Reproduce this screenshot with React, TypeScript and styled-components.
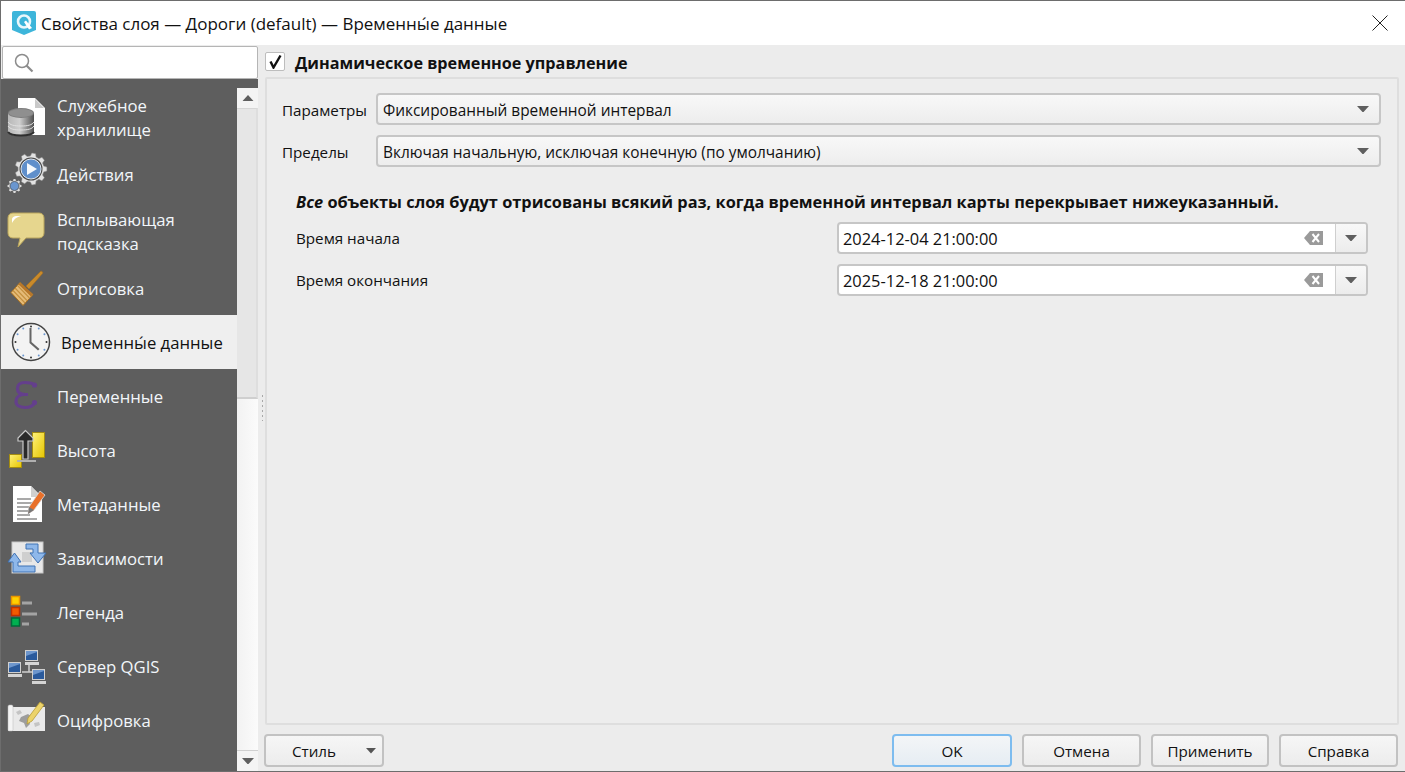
import { ReactNode } from 'react';
import styled, { createGlobalStyle } from 'styled-components';

const GlobalStyle = createGlobalStyle`
  html, body {
    margin: 0;
    padding: 0;
    background: #ececec;
    overflow: hidden;
  }
  * {
    box-sizing: border-box;
  }
`;

const Window = styled.div`
  width: 1405px;
  height: 772px;
  display: flex;
  flex-direction: column;
  border-top: 1px solid #6d6d6d;
  border-left: 1px solid #6d6d6d;
  border-bottom: 1px solid #6d6d6d;
  background: #ececec;
  font-family: 'Open Sans', 'Noto Sans', sans-serif;
  font-size: 15.2px;
  color: #111;
`;

const TitleBar = styled.div`
  height: 44px;
  flex: none;
  display: flex;
  align-items: center;
  background: #fff;
  padding-left: 11px;
  font-size: 17px;
`;

const TitleText = styled.span`
  margin-left: 5px;
  flex: 1;
`;

const CloseButton = styled.div`
  width: 16px;
  height: 16px;
  margin-right: 17px;
  margin-top: -1px;
  display: flex;
`;

const Body = styled.div`
  flex: 1;
  display: flex;
  min-height: 0;
`;

const Sidebar = styled.div`
  width: 257px;
  flex: none;
  display: flex;
  flex-direction: column;
`;

const SearchBox = styled.div`
  height: 33px;
  flex: none;
  margin: 1px 0 0 1px;
  background: #fff;
  border: 1px solid #b5b5b5;
  border-radius: 2px;
  display: flex;
  align-items: center;
  padding-left: 11px;
`;

const ListArea = styled.div`
  flex: 1;
  display: flex;
  background: #5e5e5e;
  padding-top: 9px;
  min-height: 0;
`;

const List = styled.div`
  width: 236px;
  flex: none;
`;

const Item = styled.div<{ $active?: boolean; $height: number }>`
  height: ${(p) => p.$height}px;
  display: flex;
  align-items: center;
  color: ${(p) => (p.$active ? '#111' : '#f2f6fa')};
  background: ${(p) => (p.$active ? '#efefef' : 'transparent')};
  padding-left: ${(p) => (p.$active ? 10 : 6)}px;
  font-size: 16.7px;
`;

const ItemIcon = styled.div`
  width: 40px;
  height: 40px;
  flex: none;
  margin-right: 10px;
  display: flex;
  align-items: center;
  justify-content: center;

  svg {
    overflow: visible;
  }
`;

const ItemLabel = styled.div<{ $low?: boolean }>`
  line-height: 24px;
  white-space: pre-line;
  padding-top: ${(p) => (p.$low ? 2 : 0)}px;
`;

const ScrollBar = styled.div`
  width: 21px;
  flex: none;
  display: flex;
  flex-direction: column;
  background: #f1f1f1;
`;

const ScrollButton = styled.div`
  height: 20px;
  flex: none;
  display: flex;
  align-items: center;
  justify-content: center;
  background: #f4f4f4;
`;

const ScrollThumb = styled.div`
  height: 291px;
  flex: none;
  background: #e6e6e6;
  border-top: 1px solid #d6d6d6;
  border-bottom: 2px solid #cfcfcf;
  border-right: 2px solid #dedede;
`;

const ScrollTrack = styled.div`
  flex: 1;
  background: linear-gradient(90deg, #f2f2f2, #fbfbfb);
  border-bottom: 1px solid #d0d0d0;
`;

const Splitter = styled.div`
  width: 6px;
  flex: none;
  display: flex;
  align-items: center;
  justify-content: center;
`;

const SplitterDots = styled.div`
  width: 1px;
  height: 26px;
  margin-left: 2px;
  background: repeating-linear-gradient(180deg, #a8a8a8 0 2px, transparent 2px 5px);
`;

const Main = styled.div`
  flex: 1;
  display: flex;
  flex-direction: column;
  min-width: 0;
  padding: 0 6px 3px 0;
`;

const CheckRow = styled.div`
  height: 32px;
  flex: none;
  display: flex;
  align-items: center;
  padding-left: 1px;
  background: #ececec;
  font-weight: 700;
  font-size: 16.2px;
`;

const CheckBox = styled.div`
  width: 20px;
  height: 19px;
  flex: none;
  margin-right: 10px;
  background: #fff;
  border: 1px solid #bdbdbd;
  border-radius: 2px;
  display: flex;
  align-items: center;
  justify-content: center;
`;

const CheckLabel = styled.span`
  line-height: 20px;
  padding-top: 3px;
`;

const GroupBox = styled.div`
  flex: 1;
  display: flex;
  flex-direction: column;
  margin-left: 1px;
  padding: 14px 16px 0 15px;
  background: #ededed;
  border: 2px solid #dedede;
  border-radius: 2px;
`;

const ComboRow = styled.div`
  height: 32px;
  flex: none;
  display: flex;
  align-items: center;
  margin-bottom: 10px;
`;

const ComboLabel = styled.div`
  width: 94px;
  flex: none;
  padding-top: 2px;
`;

const Combo = styled.div`
  flex: 1;
  height: 32px;
  display: flex;
  align-items: center;
  justify-content: space-between;
  padding: 0 10px 0 5px;
  background: linear-gradient(180deg, #f8f8f8, #ededed);
  border: 2px solid #c6c6c6;
  border-radius: 4px;
  font-size: 15.4px;
`;

const ComboValue = styled.span`
  padding-top: 2px;
`;

const Notice = styled.div`
  margin: 13px 0 8px 14px;
  height: 24px;
  line-height: 24px;
  font-size: 16.35px;
  font-weight: 700;
`;

const DateRow = styled.div`
  height: 32px;
  flex: none;
  display: flex;
  align-items: center;
  justify-content: space-between;
  margin: 0 13px 10px 14px;
`;

const DateField = styled.div`
  width: 531px;
  height: 32px;
  display: flex;
  align-items: center;
  background: #fff;
  border: 2px solid #c6c6c6;
  border-radius: 4px;
`;

const DateText = styled.span`
  flex: 1;
  padding-left: 4px;
  font-size: 16.4px;
`;

const ClearIcon = styled.div`
  display: flex;
  margin-right: 12px;
`;

const DateDrop = styled.div`
  width: 31px;
  height: 100%;
  flex: none;
  display: flex;
  align-items: center;
  justify-content: center;
  background: linear-gradient(180deg, #f8f8f8, #ececec);
  border-left: 1px solid #cfcfcf;
  border-radius: 0 2px 2px 0;
`;

const Footer = styled.div`
  height: 43px;
  flex: none;
  display: flex;
  align-items: center;
  gap: 10px;
  padding: 8px 1px 0 0;
`;

const Button = styled.div<{ $primary?: boolean; $width: number }>`
  width: ${(p) => p.$width}px;
  height: 33px;
  flex: none;
  display: flex;
  align-items: center;
  justify-content: center;
  background: ${(p) =>
    p.$primary ? 'linear-gradient(180deg, #f3f5f7, #e6edf3)' : 'linear-gradient(180deg, #f6f6f6, #ececec)'};
  border: 2px solid ${(p) => (p.$primary ? '#7dbcef' : '#c2c2c2')};
  border-radius: 4px;
`;

const StyleButton = styled(Button)`
  justify-content: flex-start;
  padding-left: 26px;
  position: relative;
  margin-right: auto;
`;

const StyleArrow = styled.div`
  position: absolute;
  right: 6px;
  top: 12px;
  display: flex;
`;

const Arrow = ({ up, color = '#5f5f5f', w = 12 }: { up?: boolean; color?: string; w?: number }): JSX.Element => (
  <svg width={w} height={w * 0.55} viewBox="0 0 12 6.6">
    <path d={up ? 'M0 6.6 6 0l6 6.6z' : 'M0 0h12L6 6.6z'} fill={color} />
  </svg>
);

const QgisLogo = (): JSX.Element => (
  <svg width="24" height="24" viewBox="0 0 24 24">
    <path d="M2 0h20q2 0 2 2v17l-12 5-12-5V2q0-2 2-2z" fill="#3db5da" />
    <circle cx="12" cy="10.500" r="6" fill="none" stroke="#e9f7fb" strokeWidth="2.600" />
    <path d="M12 11l2-1.500 6 7.500-3 1.500z" fill="#fff" />
  </svg>
);

const StorageIcon = (): JSX.Element => (
  <svg width="40" height="40" viewBox="0 0 40 40">
    <defs>
      <linearGradient id="dbBody" x1="0" x2="1" y1="0" y2="0">
        <stop offset="0" stopColor="#b8b8b8" />
        <stop offset="0.45" stopColor="#cfcfcf" />
        <stop offset="1" stopColor="#4e4e4e" />
      </linearGradient>
    </defs>
    <path d="M11 0h17l10 10v27H11z" fill="#fff" />
    <path d="M28 1l9 9h-9z" fill="#c9c9c9" />
    <path d="M1 15v19c0 2.500 6 4 13 4s13-1.500 13-4V15z" fill="url(#dbBody)" />
    <ellipse cx="14" cy="15" rx="13" ry="5" fill="#7c7c7c" />
    <ellipse cx="14" cy="15" rx="12" ry="4" fill="#8f8f8f" />
    <path d="M1 24c2 3 6 4 13 4s11-1 13-4M1 28c2 3 6 4 13 4s11-1 13-4" fill="none" stroke="#e0e0e0" strokeWidth="1" />
    <path d="M1 34c2 3 6 3.500 13 3.500S25 37 27 34" fill="none" stroke="#2f2f2f" strokeWidth="2" />
  </svg>
);

const gearPath = (cx: number, cy: number, outer: number, inner: number, teeth: number): string => {
  const points: string[] = [];
  for (let i = 0; i < teeth; i += 1) {
    const step = (Math.PI * 2) / teeth;
    const a = i * step;
    [
      [inner, a - step * 0.32],
      [outer, a - step * 0.17],
      [outer, a + step * 0.17],
      [inner, a + step * 0.32],
    ].forEach(([r, angle]) => {
      points.push(`${(cx + r * Math.cos(angle)).toFixed(2)} ${(cy + r * Math.sin(angle)).toFixed(2)}`);
    });
  }
  return `M${points.join('L')}z`;
};

const ActionsIcon = (): JSX.Element => (
  <svg width="40" height="40" viewBox="0 0 40 40">
    <path d={gearPath(24, 14, 16, 13, 9)} fill="#e2e2e2" stroke="#8f8f8f" strokeWidth="0.500" />
    <circle cx="24" cy="14" r="11.500" fill="#4a4a4a" />
    <circle cx="24" cy="14" r="10" fill="#5f8fcb" stroke="#dfe7f0" strokeWidth="1" />
    <path d="M20 8v12l10-6z" fill="#f4f8fc" />
    <path d={gearPath(7.500, 31, 7, 5.500, 8)} fill="#dcdcdc" />
    <circle cx="7.500" cy="31" r="4.500" fill="#6a96cf" stroke="#444" strokeWidth="0.700" />
  </svg>
);

const TipIcon = (): JSX.Element => (
  <svg width="40" height="40" viewBox="0 0 40 40">
    <path
      d="M6 1h26c3 0 5 2 5 5v15c0 3-2 5-5 5H19l-8 9 2-9H6c-3 0-5-2-5-5V6c0-3 2-5 5-5z"
      fill="#e6d68e"
      stroke="#b9a55c"
    />
    <path d="M5 11V8c0-3 2-4 5-4h6c-5 0-8 2-11 7z" fill="#fff" />
  </svg>
);

const BrushIcon = (): JSX.Element => (
  <svg width="40" height="40" viewBox="0 0 40 40">
    <path d="M19 17L33.500 2.500c1-1 3 1 2 2L22 20z" fill="#c98a2a" stroke="#a96f1d" strokeWidth="0.600" />
    <path d="M13 13.500L26 25.500 16 36.500 4 23.500z" fill="#e5bb78" stroke="#a96f1d" />
    <path d="M8 19l12 12.500M10.500 16.500L22.500 29M6 21.500L18 34M13 15L24.500 27" stroke="#c4903f" strokeWidth="1.100" />
    <path d="M13 13.500L26 25.500 24 27.500 11.500 15.500z" fill="#b8772a" />
  </svg>
);

const ClockIcon = (): JSX.Element => (
  <svg width="40" height="40" viewBox="0 0 40 40">
    <circle cx="20" cy="20" r="18.500" fill="#f3f3f3" stroke="#444" strokeWidth="1.500" />
    {Array.from({ length: 12 }).map((_, i) => {
      const a = (i * Math.PI) / 6;
      return <circle key={i} cx={20 + 15.500 * Math.sin(a)} cy={20 - 15.500 * Math.cos(a)} r="1" fill={i % 3 === 0 ? '#333' : '#6a96cf'} />;
    })}
    <path d="M18.500 6h2v14l8 7-1.500 1.500-8.500-7.500z" fill="#666" />
  </svg>
);

const EpsilonIcon = (): JSX.Element => (
  <svg width="40" height="40" viewBox="0 0 40 40">
    <path
      d="M27 8.500C24 6.500 21 6.500 18 6.500 13 6.500 10.500 9 10.500 12.500 10.500 16 13 18.500 18 18.500H21M18 18.500C12 18.500 9 21.500 9 25.500 9 29.500 13 31.500 18 31.500 23 31.500 26 30 27.500 27"
      fill="none"
      stroke="#643f8c"
      strokeWidth="3.200"
    />
    <circle cx="27.500" cy="9" r="2.600" fill="#643f8c" />
    <circle cx="27.500" cy="26.500" r="2.600" fill="#643f8c" />
  </svg>
);

const ElevationIcon = (): JSX.Element => (
  <svg width="40" height="40" viewBox="0 0 40 40">
    <defs>
      <linearGradient id="goldBar" x1="0" x2="1" y1="0" y2="1">
        <stop offset="0" stopColor="#fff27a" />
        <stop offset="1" stopColor="#e6c500" />
      </linearGradient>
    </defs>
    <rect x="25.500" y="2.500" width="12" height="25" fill="url(#goldBar)" stroke="#a48c10" />
    <rect x="2.500" y="24.500" width="12" height="13" fill="url(#goldBar)" stroke="#a48c10" />
    <path d="M10 31h19" stroke="#b0b0b0" strokeWidth="2" />
    <path d="M18.500 0.500L11 8v3h5v18h5V11h5V8z" fill="#2a2a2a" stroke="#c9c9c9" strokeWidth="1.200" />
  </svg>
);

const MetadataIcon = (): JSX.Element => (
  <svg width="40" height="40" viewBox="0 0 40 40">
    <path d="M6 2h18l11 11v25H6z" fill="#fff" />
    <path d="M24 2l10 11H24z" fill="#cfcfcf" />
    <path d="M10 15h14M10 19h16M10 23h16M10 27h14M10 31h13M10 35h20" stroke="#8d8d8d" strokeWidth="1.300" />
    <path d="M33 7l5 4-11 15-6 4 1-7z" fill="#e8702a" stroke="#d8dde2" strokeWidth="0.800" />
    <path d="M21 30l1-7 5 3z" fill="#777" />
  </svg>
);

const DepsIcon = (): JSX.Element => (
  <svg width="40" height="40" viewBox="0 0 40 40">
    <rect x="5" y="4" width="31" height="31" fill="#e8e8e8" stroke="#c8c8c8" />
    <rect x="15" y="14" width="10" height="10" fill="#cfcfcf" />
    <path d="M19 6h12v9h8L31 25 23 15h3v-4h-7z" fill="#8fb8ea" stroke="#3f72b4" />
    <path d="M7.500 15L14 24h-3v4h17v6H6v-10H1z" fill="#8fb8ea" stroke="#3f72b4" />
  </svg>
);

const LegendIcon = (): JSX.Element => (
  <svg width="40" height="40" viewBox="0 0 40 40">
    <rect x="4.500" y="4.500" width="8" height="8" fill="#ffd000" stroke="#e89400" strokeWidth="1.500" />
    <rect x="4.500" y="15.500" width="8" height="8" fill="#f25a00" stroke="#c03000" strokeWidth="1.500" />
    <rect x="4.500" y="26" width="8" height="8" fill="#00b050" stroke="#006a3a" strokeWidth="1.500" />
    <path d="M15 11h10M15 22h15M15 32h7" stroke="#a4a4a4" strokeWidth="3" />
  </svg>
);

const Computer = ({ x, y }: { x: number; y: number }): JSX.Element => (
  <g>
    <rect x={x + 0.5} y={y + 0.5} width="12" height="10" fill="#2a5a9c" stroke="#d0d0d0" />
    <path d={`M${x + 1} ${y + 6}l11-4v-1h-11z`} fill="#6d96cd" />
    <rect x={x} y={y + 12} width="14" height="3" fill="#d4d4d4" />
  </g>
);

const ServerIcon = (): JSX.Element => (
  <svg width="40" height="40" viewBox="0 0 40 40">
    <path d="M22 19v7M15 26h11" stroke="#cfcfcf" strokeWidth="1.500" />
    <Computer x={18} y={4} />
    <Computer x={1} y={16} />
    <Computer x={25} y={23} />
  </svg>
);

const DigitizeIcon = (): JSX.Element => (
  <svg width="40" height="40" viewBox="0 0 40 40">
    <rect x="1" y="7" width="37" height="24" fill="#e9e9e9" />
    <rect x="1" y="5" width="5" height="26" rx="1.500" fill="#f4f4f4" stroke="#bbb" strokeWidth="0.500" />
    <path d="M14 17l7-3 4 3-3 4 1 3-4 4-2-5-5-2z" fill="#9d9d9d" />
    <path d="M9 12l4-2 2 3-4 2zM27 23l5-1 1 3-5 2z" fill="#c4c4c4" />
    <path d="M33 2l4 3-12 16-5 3 1-6z" fill="#ecd36a" stroke="#b89c35" strokeWidth="0.800" />
  </svg>
);

type SidebarEntry = { label: string; icon: ReactNode; height: number; active?: boolean; low?: boolean };

const entries: SidebarEntry[] = [
  { label: 'Служебное\nхранилище', icon: <StorageIcon />, height: 60 },
  { label: 'Действия', icon: <ActionsIcon />, height: 54 },
  { label: 'Всплывающая\nподсказка', icon: <TipIcon />, height: 60 },
  { label: 'Отрисовка', icon: <BrushIcon />, height: 53 },
  { label: 'Временны́е данные', icon: <ClockIcon />, height: 54, active: true, low: true },
  { label: 'Переменные', icon: <EpsilonIcon />, height: 54, low: true },
  { label: 'Высота', icon: <ElevationIcon />, height: 54, low: true },
  { label: 'Метаданные', icon: <MetadataIcon />, height: 54, low: true },
  { label: 'Зависимости', icon: <DepsIcon />, height: 54, low: true },
  { label: 'Легенда', icon: <LegendIcon />, height: 54, low: true },
  { label: 'Сервер QGIS', icon: <ServerIcon />, height: 54, low: true },
  { label: 'Оцифровка', icon: <DigitizeIcon />, height: 54, low: true },
];

const ClearGlyph = (): JSX.Element => (
  <svg width="19" height="14" viewBox="0 0 19 14">
    <path d="M6 0h13v14H6L0 7z" fill="#9a9a9a" />
    <path d="M8.500 3l6.500 8M15 3l-6.500 8" stroke="#fff" strokeWidth="2" />
  </svg>
);

const App = (): JSX.Element => {
  return (
    <Window>
      <GlobalStyle />
      <TitleBar>
        <QgisLogo />
        <TitleText>Свойства слоя — Дороги (default) — Временны́е данные</TitleText>
        <CloseButton>
          <svg width="16" height="16" viewBox="0 0 16 16">
            <path d="M.5.500l15 15M15.500.500l-15 15" stroke="#222" strokeWidth="1" />
          </svg>
        </CloseButton>
      </TitleBar>
      <Body>
        <Sidebar>
          <SearchBox>
            <svg width="20" height="20" viewBox="0 0 20 20">
              <circle cx="8" cy="8" r="6.500" fill="none" stroke="#8c8c8c" strokeWidth="1.500" />
              <path d="M12.500 12.500l6 6" stroke="#8c8c8c" strokeWidth="2.200" />
            </svg>
          </SearchBox>
          <ListArea>
            <List>
              {entries.map((entry) => (
                <Item key={entry.label} $active={entry.active} $height={entry.height}>
                  <ItemIcon>{entry.icon}</ItemIcon>
                  <ItemLabel $low={entry.low}>{entry.label}</ItemLabel>
                </Item>
              ))}
            </List>
            <ScrollBar>
              <ScrollButton>
                <Arrow up />
              </ScrollButton>
              <ScrollThumb />
              <ScrollTrack />
              <ScrollButton>
                <Arrow />
              </ScrollButton>
            </ScrollBar>
          </ListArea>
        </Sidebar>
        <Splitter>
          <SplitterDots />
        </Splitter>
        <Main>
          <CheckRow>
            <CheckBox>
              <svg width="15" height="15" viewBox="0 0 15 15">
                <path d="M2.500 7.500l3 6 7-12" fill="none" stroke="#111" strokeWidth="2.400" />
              </svg>
            </CheckBox>
            <CheckLabel>Динамическое временное управление</CheckLabel>
          </CheckRow>
          <GroupBox>
            <ComboRow>
              <ComboLabel>Параметры</ComboLabel>
              <Combo>
                <ComboValue>Фиксированный временной интервал</ComboValue>
                <Arrow />
              </Combo>
            </ComboRow>
            <ComboRow>
              <ComboLabel>Пределы</ComboLabel>
              <Combo>
                <ComboValue>Включая начальную, исключая конечную (по умолчанию)</ComboValue>
                <Arrow />
              </Combo>
            </ComboRow>
            <Notice>
              <em>Все</em> объекты слоя будут отрисованы всякий раз, когда временной интервал карты перекрывает нижеуказанный.
            </Notice>
            <DateRow>
              Время начала
              <DateField>
                <DateText>2024-12-04 21:00:00</DateText>
                <ClearIcon>
                  <ClearGlyph />
                </ClearIcon>
                <DateDrop>
                  <Arrow />
                </DateDrop>
              </DateField>
            </DateRow>
            <DateRow>
              Время окончания
              <DateField>
                <DateText>2025-12-18 21:00:00</DateText>
                <ClearIcon>
                  <ClearGlyph />
                </ClearIcon>
                <DateDrop>
                  <Arrow />
                </DateDrop>
              </DateField>
            </DateRow>
          </GroupBox>
          <Footer>
            <StyleButton $width={120}>
              Стиль
              <StyleArrow>
                <Arrow w={10} color="#555" />
              </StyleArrow>
            </StyleButton>
            <Button $primary $width={120}>OK</Button>
            <Button $width={119}>Отмена</Button>
            <Button $width={118}>Применить</Button>
            <Button $width={119}>Справка</Button>
          </Footer>
        </Main>
      </Body>
    </Window>
  );
};

export default App;
